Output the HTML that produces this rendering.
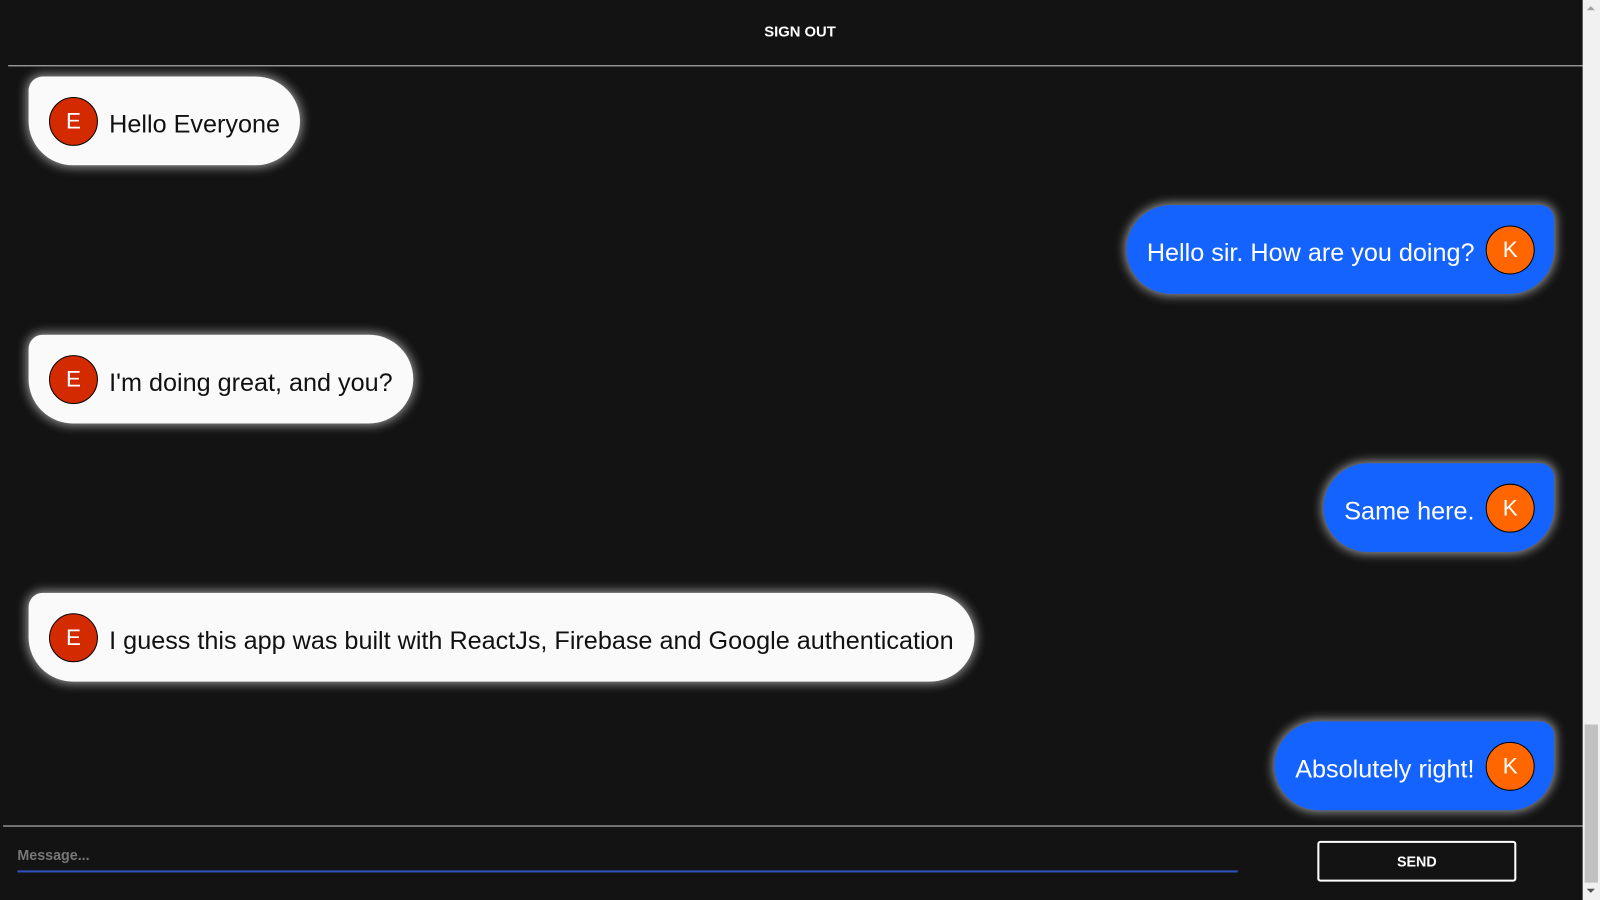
<!DOCTYPE html>
<html><head><meta charset="utf-8"><style>
html,body{margin:0;padding:0;background:#131313;width:1600px;height:900px;overflow:hidden}
#w{position:absolute;left:0;top:0;width:1568px;height:882px;transform:scale(1.020408);transform-origin:0 0;font-family:"Liberation Sans",sans-serif}
.a{position:absolute}
.so{left:0;width:1568px;top:24px;text-align:center;color:#fff;font-weight:bold;font-size:14.5px}
.hl{left:8px;width:1543px;top:64px;height:1px;background:#ccc}
.b{position:absolute;height:87px;box-sizing:border-box;display:flex;align-items:center;font-size:24.7px;box-shadow:0 0 10px 2px rgba(255,255,255,.55)}
.l{left:28px;background:#fafafa;color:#111;border-radius:14px 44px 44px 44px;padding-left:20px;padding-right:20px}
.r{right:45px;background:#1463ff;color:#fff;border-radius:44px 14px 44px 44px;padding-left:20px;padding-right:19px;flex-direction:row}
.av{width:46px;height:46px;border-radius:50%;border:1px solid #000;color:#fff;display:flex;align-items:center;justify-content:center;font-size:22px;flex:none}
.l .av{background:#d42a00;margin-right:11px}
.r .av{background:#ff6600;margin-left:11px}
.t{position:relative;top:4px}
</style></head><body><div id="w">
<div class="a so">SIGN OUT</div>
<div class="a hl"></div>
<div class="b l" style="top:75px"><div class="av">E</div><span class="t">Hello Everyone</span></div>
<div class="b r" style="top:201px"><span class="t">Hello sir. How are you doing?</span><div class="av">K</div></div>
<div class="b l" style="top:328px"><div class="av">E</div><span class="t">I'm doing great, and you?</span></div>
<div class="b r" style="top:454px"><span class="t">Same here.</span><div class="av">K</div></div>
<div class="b l" style="top:581px"><div class="av">E</div><span class="t">I guess this app was built with ReactJs, Firebase and Google authentication</span></div>
<div class="b r" style="top:707px"><span class="t">Absolutely right!</span><div class="av">K</div></div>
<div class="a" style="left:3px;width:1548px;top:809px;height:1px;background:#ccc"></div>
<div class="a" style="left:17px;top:830px;color:#777;font-weight:bold;font-size:14px">Message...</div>
<div class="a" style="left:17px;top:853px;width:1196px;height:2px;background:#3050c0"></div>
<div class="a" style="left:1291px;top:824px;width:195px;height:40px;box-sizing:border-box;border:2px solid #fff;border-radius:3px;color:#fff;font-weight:bold;font-size:14px;display:flex;align-items:center;justify-content:center">SEND</div>
<div class="a" style="left:1551px;top:0;width:17px;height:882px;background:#f1f1f1"></div>
<div class="a" style="left:1553px;top:710px;width:13px;height:155px;background:#c1c1c1"></div>
<div class="a" style="left:1555px;top:871px;width:0;height:0;border-left:4px solid transparent;border-right:4px solid transparent;border-top:4px solid #505050"></div>
<div class="a" style="left:1555px;top:6px;width:0;height:0;border-left:4px solid transparent;border-right:4px solid transparent;border-bottom:4px solid #a3a3a3"></div>
</div></body></html>
